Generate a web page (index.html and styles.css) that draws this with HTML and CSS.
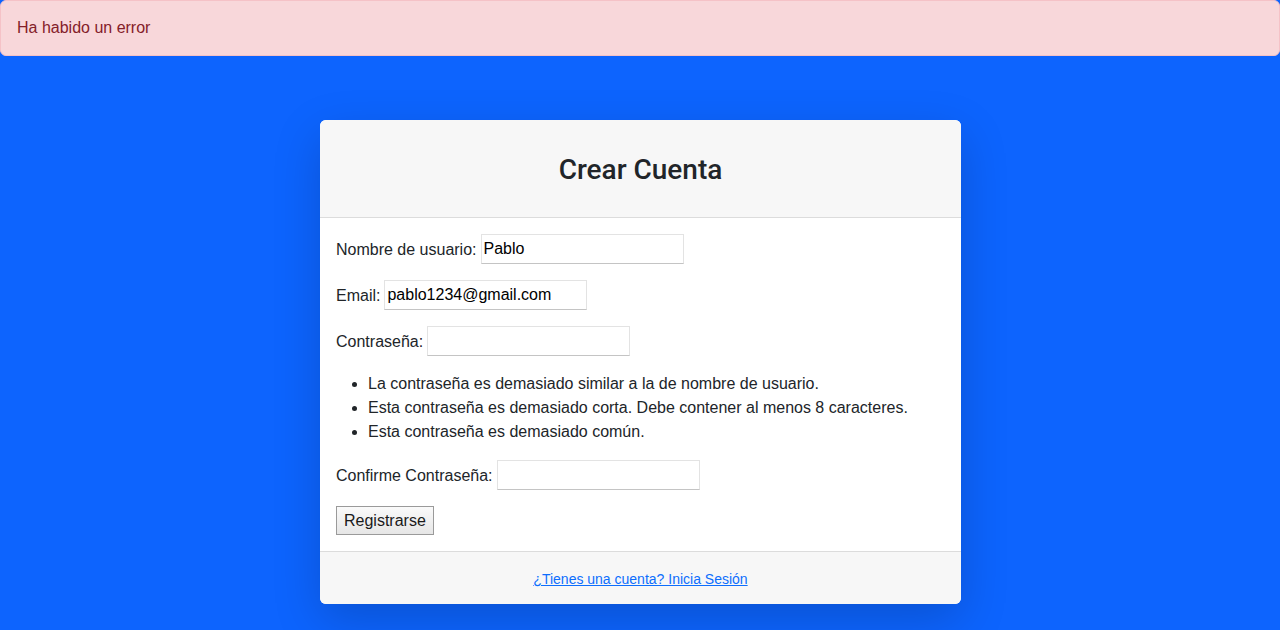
FILE: index.html
```html
<!DOCTYPE html>
<html lang="es">
<head>
<meta charset="utf-8">
<title>Crear Cuenta</title>
<link rel="stylesheet" href="styles.css">
</head>
<body>
  <div class="alert">Ha habido un error</div>
  <main class="page">
    <section class="card">
      <header class="card-header">
        <h3 class="title">Crear Cuenta</h3>
      </header>
      <form class="card-body">
        <p class="row"><label for="u">Nombre de usuario:</label> <input id="u" class="field" type="text" value="Pablo"></p>
        <p class="row"><label for="e">Email:</label> <input id="e" class="field" type="text" value="pablo1234@gmail.com"></p>
        <p class="row"><label for="p">Contraseña:</label> <input id="p" class="field" type="password"></p>
        <ul class="errors">
          <li>La contraseña es demasiado similar a la de nombre de usuario.</li>
          <li>Esta contraseña es demasiado corta. Debe contener al menos 8 caracteres.</li>
          <li>Esta contraseña es demasiado común.</li>
        </ul>
        <p class="row"><label for="c">Confirme Contraseña:</label> <input id="c" class="field" type="password"></p>
        <button type="button" class="btn">Registrarse</button>
      </form>
      <footer class="card-footer">
        <a href="#" class="link">¿Tienes una cuenta? Inicia Sesión</a>
      </footer>
    </section>
  </main>
</body>
</html>
```
FILE: styles.css
```css
* { box-sizing: border-box; }
html, body { margin: 0; padding: 0; }
body {
  background: #0d64fe;
  font-family: "Liberation Sans", Arial, sans-serif;
  font-size: 16px;
  line-height: 1.5;
  color: #212529;
  height: 630px;
  overflow: hidden;
}
.alert {
  background: #f8d7da;
  color: #842029;
  border: 1px solid #f5c2c7;
  border-radius: 6px;
  padding: 15px 16px;
  height: 56px;
}
.page {
  display: flex;
  justify-content: center;
  padding-top: 64px;
}
.card {
  width: 641px;
  background: #fff;
  border-radius: 6px;
  box-shadow: 0 16px 48px rgba(0, 0, 0, 0.175);
  overflow: hidden;
  margin-left: 1px;
}
.card-header {
  background: #f7f7f7;
  border-bottom: 1px solid #dcdcdc;
  padding: 33px 16px 31px;
  text-align: center;
  height: 98px;
}
.title {
  margin: 0;
  font-family: Roboto, "Liberation Sans", Arial, sans-serif;
  font-size: 28px;
  font-weight: 500;
  line-height: 1.2;
}
.card-body {
  padding: 16px;
  margin: 0;
}
.row {
  margin: 0 0 16px;
  display: flex;
  align-items: center;
  gap: 4px;
  height: 30px;
  padding-top: 1px;
}
.field {
  width: 203px;
  height: 30px;
  margin-top: -1px;
  border: 1px solid #e3e3e3;
  border-bottom-color: #c4c4c4;
  padding: 2px 2px;
  font-family: "Liberation Sans", Arial, sans-serif;
  font-size: 16px;
  color: #000;
  background: #fff;
  outline: none;
}
.errors {
  margin: 0 0 16px;
  padding-left: 32px;
}
.btn {
  display: block;
  height: 29px;
  padding: 1px 7px;
  font-family: "Liberation Sans", Arial, sans-serif;
  font-size: 16px;
  color: #1a1a1a;
  background: linear-gradient(#fafafa, #e6e6e6);
  border: 1px solid #9a9a9a;
  border-radius: 0;
}
.card-footer {
  background: #f7f7f7;
  border-top: 1px solid #dcdcdc;
  padding: 17px 16px 15px;
  text-align: center;
  font-size: 14px;
  line-height: 20px;
  height: 53px;
}
.link {
  color: #0d6efd;
  text-decoration: underline;
}
```
